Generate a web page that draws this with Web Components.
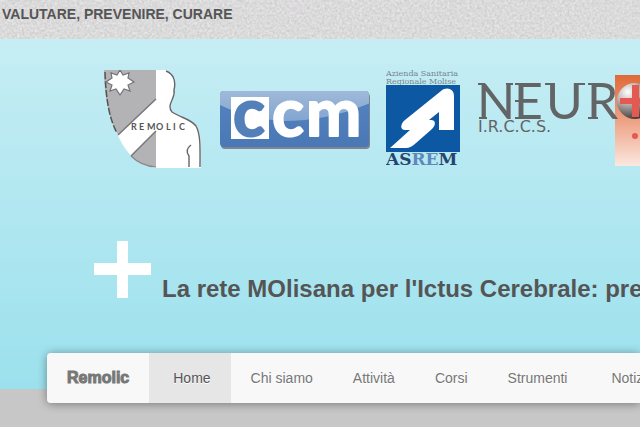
<!DOCTYPE html>
<html lang="it">
<head>
<meta charset="utf-8">
<title>Remolic</title>
<style>
  html { background: #c8c7c8; }
  body { margin: 0; font-family: "Liberation Sans", Arial, sans-serif; color: #555; overflow-x: hidden; }
</style>
</head>
<body>
<remolic-page></remolic-page>
<script>
const define = (name, html) => {
  const template = document.createElement('template');
  template.innerHTML = html;
  customElements.define(name, class extends HTMLElement {
    constructor() {
      super();
      this.attachShadow({ mode: 'open' }).append(template.content.cloneNode(true));
    }
  });
};

define('top-strip', `
<style>
  :host { display: grid; background: #dcdbdc; overflow: hidden; }
  svg { grid-area: 1 / 1; width: 100%; height: 39px; display: block; }
  p { grid-area: 1 / 1; margin: 0; padding: 5px 2px 16px; font-size: 14px; line-height: 18px; font-weight: bold; z-index: 1; white-space: nowrap; }
</style>
<svg aria-hidden="true">
  <filter id="paper" x="0" y="0" width="100%" height="100%" color-interpolation-filters="sRGB">
    <feTurbulence type="fractalNoise" baseFrequency="0.4" numOctaves="3" seed="8"/>
    <feColorMatrix values="0.14 0.08 0 0 0.75  0.14 0.08 0 0 0.745  0.14 0.08 0 0 0.75  0 0 0 0 1"/>
  </filter>
  <rect width="100%" height="100%" filter="url(#paper)"/>
</svg>
<p><slot></slot></p>`);

define('logo-remolic', `
<style>:host { display: block; flex: none; } svg { display: block; }</style>
<svg width="99" height="98" viewBox="0 0 99 98" role="img" aria-label="Remolic">
  <path d="M0 0H62C70 3 72 11 70 20C71 24 69 27 68 30C66 34 65 39 68 42C77 48 87 49 92 56C98 64 97 80 97 98H56C26 98 5 68 0 0Z" fill="#fff"/>
  <path d="M0 0H52V29L14 65C5 48 0 27 0 0Z M27 86L52 61V97C43 97 35 93 27 86Z" fill="#b3b2b5"/>
  <path d="M14 65L52 29 M27 86L52 61" fill="none" stroke="#77767a" stroke-width="1.5"/>
  <path d="M1 2C2 29 5 48 13 63" fill="none" stroke="#555" stroke-width="1.5" stroke-dasharray="7 2"/>
  <path d="M27 86Q37 96 52 97" fill="none" stroke="#888" stroke-width="1.2"/>
  <path d="M62 1C70 4 72 12 70 20C71 24 69 27 68 30C66 34 65 39 68 42C77 48 87 49 92 56C97 65 96 80 96 97 M85 97V86C82 82 83 78 87 75" fill="none" stroke="#66666b" stroke-width="1.4"/>
  <path d="M16 0L19 5L25 3L24 8L30 12L24 15L26 21L20 19L16 25L12 19L6 21L8 15L2 12L8 8L7 3L13 5Z" fill="#fff" stroke="#737277" stroke-width="1.2"/>
  <text x="27 35 43 52 62 69 75" y="60" font-family="Lato, sans-serif" font-weight="bold" font-size="9" fill="#555">REMOLIC</text>
</svg>`);

define('logo-ccm', `
<style>:host { display: block; flex: none; } svg { display: block; }</style>
<svg width="151" height="60" viewBox="1 0 151 60" role="img" aria-label="ccm">
  <defs>
    <linearGradient id="base" x2="0" y2="1"><stop stop-color="#5484bf"/><stop offset="1" stop-color="#4a78b5"/></linearGradient>
    <linearGradient id="shine" x2="0" y2="1"><stop stop-color="#a0bad9"/><stop offset="1" stop-color="#82a5d0"/></linearGradient>
    <clipPath id="panel"><rect x="2" y="1" width="149" height="56" rx="4"/></clipPath>
  </defs>
  <rect x="3" y="3" width="149" height="56" rx="4" fill="#7d8593"/>
  <rect x="2" y="1" width="149" height="56" rx="4" fill="url(#base)"/>
  <path clip-path="url(#panel)" d="M0 0H152V13C124 25 94 31 66 31C38 30 16 22 0 14Z" fill="url(#shine)"/>
  <rect x="13" y="7" width="38" height="42" fill="#fff"/>
  <g font-family="Lato, sans-serif" font-weight="bold" font-size="66" stroke-width="2" stroke-linejoin="round">
    <text x="15" y="46" fill="#5380b8" stroke="#5380b8">c</text>
    <text x="54" y="46" fill="#fff" stroke="#fff">c</text>
    <text x="88" y="46" fill="#fff" stroke="#fff">m</text>
  </g>
</svg>`);

define('logo-asrem', `
<style>:host { display: block; flex: none; } svg { display: block; }</style>
<svg width="76" height="98" viewBox="0 0 76 98" role="img" aria-label="ASREM">
  <g font-family="'DejaVu Serif', serif" font-size="8" fill="#74858d">
    <text x="0" y="6">Azienda Sanitaria</text>
    <text x="0" y="14">Regionale Molise</text>
  </g>
  <rect y="15" width="74" height="67" fill="#0c58a2"/>
  <path d="M4 78L24 60H19C14 60 14 54 19 50L55 21C61 16 68 19 68 26V60H53V42L43 50H45C50 50 50 55 46 59L30 73Q25 78 20 78Z" fill="#fff"/>
  <text x="0" y="95" font-family="'DejaVu Serif', serif" font-weight="bold" font-size="17" fill="#25446f">AS<tspan fill="#5e89b8">RE</tspan>M</text>
</svg>`);

define('logo-neuromed', `
<style>:host { display: block; flex: none; } svg { display: block; }</style>
<svg width="220" height="98" viewBox="0 0 220 98" role="img" aria-label="Neuromed I.R.C.C.S.">
  <defs>
    <linearGradient id="flame" x2="0" y2="1"><stop stop-color="#e06a38"/><stop offset=".5" stop-color="#eda184"/><stop offset="1" stop-color="#fbe8df"/></linearGradient>
    <radialGradient id="ball" cx=".3" cy=".25" r=".8"><stop stop-color="#fff"/><stop offset=".4" stop-color="#bdb5b3"/><stop offset="1" stop-color="#3c3433"/></radialGradient>
  </defs>
  <rect x="137" y="5" width="60" height="91" fill="url(#flame)"/>
  <circle cx="157" cy="31" r="18" fill="url(#ball)"/>
  <path d="M154 15H161V28H173V34H161V47H154V34H142V28H154Z" fill="#e45a50"/>
  <circle cx="157" cy="66" r="3" fill="#e45a50"/>
  <text x="-1 36 68 109" y="49" font-family="Lato, sans-serif" font-size="50" fill="#636466">NEUR</text>
  <path d="M0 14H6M28 14H35M1 48H9M37 14H42M37 31H42M37 48H42M67 14H77M98 14H107M110 14H115M110 48H120" stroke="#636466" stroke-width="2"/>
  <text x="0" y="62" font-family="'DejaVu Sans', sans-serif" font-size="16" fill="#636466">I.R.C.C.S.</text>
</svg>`);

define('page-hero', `
<style>
  :host { display: block; padding: 31px 0 89px 94px; background: linear-gradient(#c6edf4, #9be1ed); overflow: hidden; }
  .logos { display: flex; gap: 16px; padding-left: 10px; }
  .logos logo-ccm { padding-top: 20px; }
  .title { display: flex; align-items: flex-end; gap: 11px; padding-top: 73px; }
  svg { flex: none; display: block; margin-bottom: 2px; }
  h1 { margin: 0; font-size: 24px; line-height: 22px; white-space: nowrap; }
</style>
<div class="logos">
  <logo-remolic></logo-remolic><logo-ccm></logo-ccm><logo-asrem></logo-asrem><logo-neuromed></logo-neuromed>
</div>
<div class="title">
  <svg width="57" height="57" viewBox="0 0 57 57" aria-hidden="true"><path d="M23 0H34V22H57V34H34V57H23V34H0V22H23Z" fill="#fff"/></svg>
  <h1><slot></slot></h1>
</div>`);

define('nav-item', `
<style>
  :host { display: flex; flex: none; }
  a { display: flex; align-items: center; padding: 0 20px; color: #777; font-size: 14px; line-height: 20px; text-decoration: none; text-shadow: 0 1px 0 #fff; white-space: nowrap; }
  :host([spaced]) a { padding-left: 24px; }
  :host([active]) a { background: #e6e6e6; color: #555; }
</style>
<a href="#"><slot></slot></a>`);

define('nav-bar', `
<style>
  :host { display: block; position: relative; margin: -36px 0 24px 47px; border-radius: 4px 0 0 4px; box-shadow: 0 1px 10px rgba(0,0,0,.4); }
  nav { display: flex; height: 50px; overflow: hidden; background: #f8f8f8; border-radius: 4px 0 0 4px; }
  .brand { flex: none; display: flex; align-items: center; padding: 0 20px; color: #777; font-size: 16px; line-height: 20px; font-weight: bold; text-decoration: none; -webkit-text-stroke: 1px #777; }
</style>
<nav><a class="brand" href="#">Remolic</a><slot></slot></nav>`);

define('remolic-page', `
<style>:host { display: block; overflow: hidden; }</style>
<top-strip>VALUTARE, PREVENIRE, CURARE</top-strip>
<page-hero>La rete MOlisana per l'Ictus Cerebrale: prevenire</page-hero>
<nav-bar>
  <nav-item active spaced>Home</nav-item>
  <nav-item>Chi siamo</nav-item>
  <nav-item>Attività</nav-item>
  <nav-item>Corsi</nav-item>
  <nav-item>Strumenti</nav-item>
  <nav-item spaced>Notizie</nav-item>
</nav-bar>`);
</script>
</body>
</html>
